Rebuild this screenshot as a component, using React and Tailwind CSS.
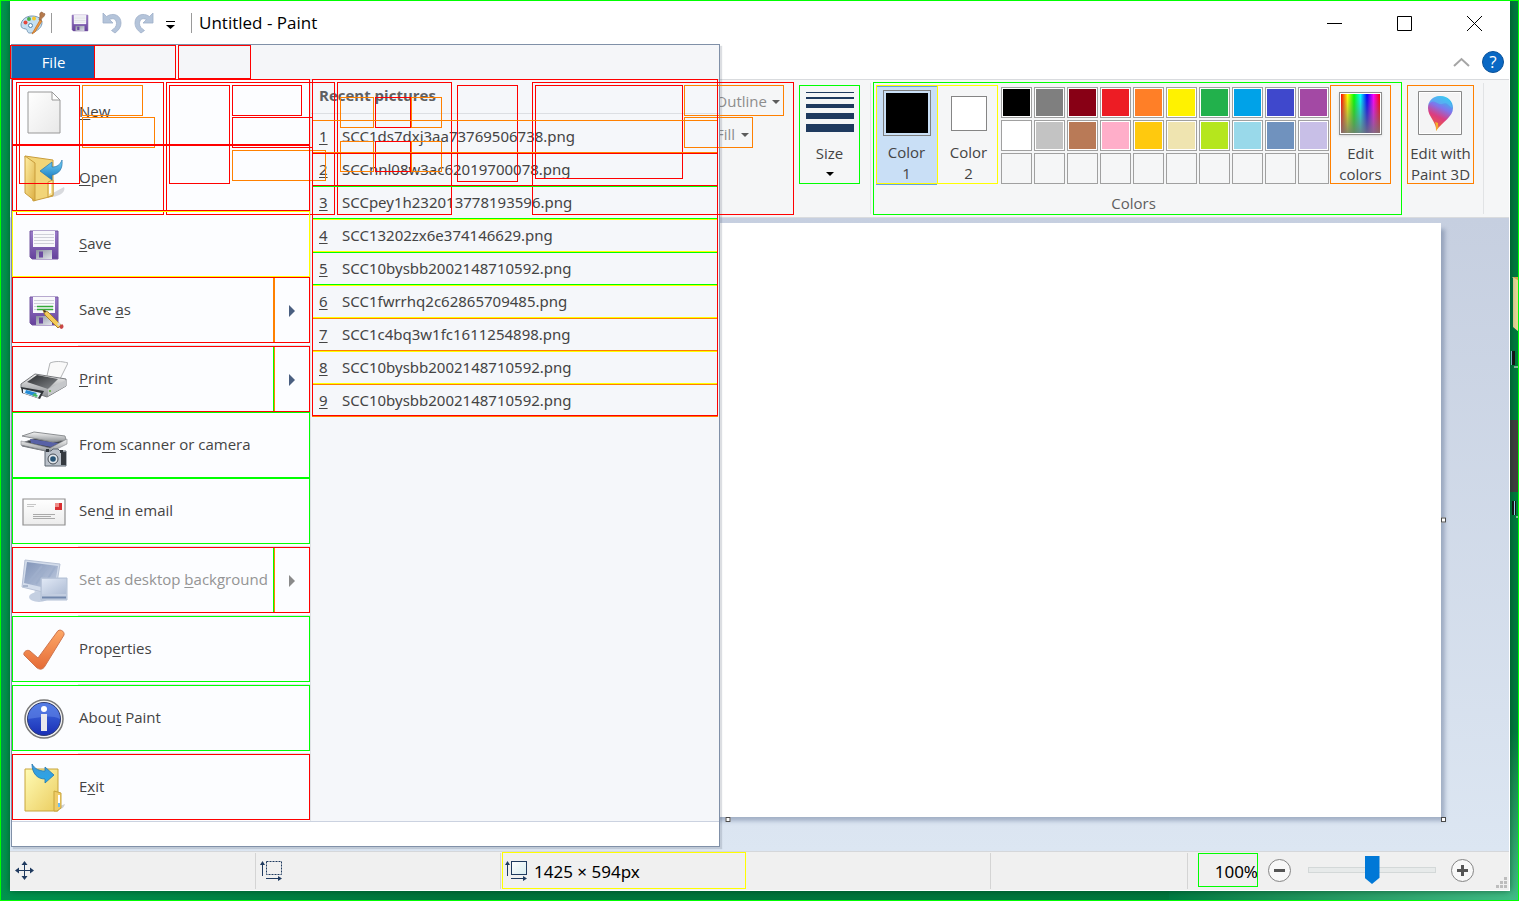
import React from "react";

const swatches = [
  ["Black", "bg-black"], ["Gray", "bg-[#7f7f7f]"], ["Dark red", "bg-[#880015]"], ["Red", "bg-[#ed1c24]"], ["Orange", "bg-[#ff7f27]"],
  ["Yellow", "bg-[#fff200]"], ["Green", "bg-[#22b14c]"], ["Turquoise", "bg-[#00a2e8]"], ["Indigo", "bg-[#3f48cc]"], ["Purple", "bg-[#a349a4]"],
  ["White", "bg-white"], ["Light gray", "bg-[#c3c3c3]"], ["Brown", "bg-[#b97a57]"], ["Rose", "bg-[#ffaec9]"], ["Gold", "bg-[#ffc90e]"],
  ["Light yellow", "bg-[#efe4b0]"], ["Lime", "bg-[#b5e61d]"], ["Light turquoise", "bg-[#99d9ea]"], ["Blue gray", "bg-[#7092be]"], ["Lavender", "bg-[#c8bfe7]"],
];

const recent = [
  "SCC1ds7dxj3aa73769506738.png",
  "SCCnnl08w3ac62019700078.png",
  "SCCpey1h232013778193596.png",
  "SCC13202zx6e374146629.png",
  "SCC10bysbb2002148710592.png",
  "SCC1fwrrhq2c62865709485.png",
  "SCC1c4bq3w1fc1611254898.png",
  "SCC10bysbb2002148710592.png",
  "SCC10bysbb2002148710592.png",
];

const R = "#ff0000";
const O = "#ff8000";
const Y = "#ffff00";
const G = "#00ff00";

// Element bounds: colour, left, top, right, bottom.
const bounds = [
  [G, 0, 0, 1518, 900],
  [R, 10, 45, 94, 78], [R, 94, 45, 175, 78], [R, 178, 45, 250, 78],
  [R, 16, 82, 163, 214], [R, 19, 85, 79, 183], [O, 82, 85, 142, 115], [O, 82, 117, 154, 147],
  [R, 166, 82, 334, 214], [R, 169, 85, 229, 183], [R, 232, 85, 301, 115], [R, 232, 117, 312, 147], [O, 232, 150, 325, 180],
  [R, 337, 82, 451, 214], [O, 340, 97, 373, 127], [O, 411, 97, 441, 127], [R, 375, 97, 410, 127],
  [O, 340, 141, 373, 171], [O, 411, 141, 441, 171], [R, 375, 141, 410, 171],
  [R, 457, 85, 517, 181], [R, 532, 82, 793, 214], [R, 535, 85, 682, 178],
  [O, 684, 85, 783, 115], [O, 684, 117, 752, 147],
  [G, 799, 85, 859, 183], [G, 873, 82, 1401, 214], [Y, 876, 85, 937, 183], [Y, 937, 85, 997, 183],
  [O, 1330, 85, 1390, 183], [O, 1407, 85, 1473, 183],
  [Y, 12, 211, 309, 276], [G, 12, 412, 309, 477], [G, 12, 478, 309, 543],
  [O, 12, 277, 273, 342], [O, 274, 277, 309, 342], [R, 12, 277, 309, 342],
  [G, 12, 346, 273, 411], [O, 274, 346, 309, 411], [R, 12, 346, 309, 411],
  [G, 12, 547, 273, 612], [O, 274, 547, 309, 612], [R, 12, 547, 309, 612],
  [G, 12, 616, 309, 681], [G, 12, 685, 309, 750], [R, 12, 754, 309, 819],
  [R, 12, 79, 309, 144], [R, 12, 145, 309, 210],
  [O, 312, 120, 717, 152], [R, 312, 153, 717, 185], [G, 312, 186, 717, 218], [Y, 312, 219, 717, 251],
  [G, 312, 252, 717, 284], [Y, 312, 285, 717, 317], [O, 312, 318, 717, 350], [Y, 312, 351, 717, 383],
  [O, 312, 384, 717, 416], [R, 312, 79, 717, 415],
  [Y, 502, 852, 745, 888], [G, 1198, 853, 1257, 886],
];

function Bounds() {
  return (
    <svg className="pointer-events-none absolute left-0 top-0 z-20" width="1519" height="901" fill="none" shapeRendering="crispEdges" aria-hidden="true">
      {bounds.map(([c, x0, y0, x1, y1], i) => (
        <rect key={i} x={x0 + 0.5} y={y0 + 0.5} width={x1 - x0} height={y1 - y0} stroke={c} />
      ))}
    </svg>
  );
}

function Gradient({ id, from, to, x2 = 0, y2 = 1 }) {
  return (
    <linearGradient id={id} x1="0" y1="0" x2={x2} y2={y2}>
      <stop offset="0" stopColor={from} />
      <stop offset="1" stopColor={to} />
    </linearGradient>
  );
}

function PaletteIcon() {
  return (
    <svg width="26" height="26" viewBox="0 0 26 26">
      <path d="M12 6C6 6 1 10 1 15c0 3 2 3.600 4 3.800 2 .2 2 1.200 2.500 2.800C8.500 24 12 23 15 21.500c4-2 7-5 7-9C22 9 18 6 12 6Z" fill="#c4dff2" stroke="#7799b5" />
      <circle cx="5.500" cy="12.500" r="2" fill="#e4473c" /><circle cx="9" cy="9" r="2" fill="#4caf50" />
      <circle cx="14" cy="8.500" r="2" fill="#f5c52c" /><circle cx="10.500" cy="15.500" r="2" fill="#fff" stroke="#5785ac" />
      <path d="m13 22 7-12 2 1-7 11-3 2Z" fill="#f29a3b" stroke="#ba6a24" strokeWidth=".7" />
      <path d="m19 10 1-4c-1-3 1-4 2-4 1 2 3 1 3 2-1 4-3 3-4 6Z" fill="#b67a4c" stroke="#8c5b38" strokeWidth=".6" />
    </svg>
  );
}

function Floppy({ size = 32, pencil = false }) {
  return (
    <svg width={size} height={size} viewBox="0 0 32 32" overflow="visible">
      <defs><Gradient id="flop" from="#9b7cc9" to="#65419b" /><Gradient id="shut" from="#8b919e" to="#e3e6ec" x2={1} /></defs>
      <path d="M2 2h28v28H4l-2-2Z" fill="url(#flop)" stroke="#72549f" />
      <path d="M5 2h22v16H5Z" fill="#f8f8fb" />
      <path d="M6 5.500h20M6 8.500h20M6 11.500h20M6 14.500h20" stroke="#cfd0d8" />
      <path d="M8 21h16v9H8Z" fill="url(#shut)" /><path d="M11 22.500h4v6h-4Z" fill="#6b4aa1" />
      {pencil && (
        <g>
          <path d="M9 11.500h16M9 14.500h16" stroke="#35aa38" strokeWidth="1.500" />
          <path d="m15 15 5 2 13 13-3 3-13-13Z" fill="#f5cb59" stroke="#a9822f" />
          <path d="m15 15 3 1-1 2Z" fill="#2b2b2b" />
          <path d="m29 29 2-2 2 2-2 2Z" fill="#d5d5d5" /><path d="m31 32 3-3c3 2 1 5-1 5Z" fill="#c94646" />
        </g>
      )}
    </svg>
  );
}

function UndoIcon({ flip = false }) {
  return (
    <svg width="20" height="22" viewBox="0 0 20 22" className={flip ? "-scale-x-100" : ""}>
      <path d="M1 1v10h10L7.500 7.500c4-2 7 0 7 4 0 3-2 5-5 7L13 21c4-3 6-6 6-10C19 3 11 0 4.500 4.500Z" fill="#b4c4da" stroke="#9fb0c9" strokeWidth=".8" />
    </svg>
  );
}

function NewIcon() {
  return (
    <svg width="36" height="44" viewBox="0 0 36 44">
      <defs><Gradient id="paper" from="#ffffff" to="#e8e8e8" x2={1} /></defs>
      <path d="M2 1h24l8 8v33H2Z" fill="url(#paper)" stroke="#989898" /><path d="M26 1v8h8Z" fill="#fff" stroke="#989898" />
    </svg>
  );
}

function OpenIcon() {
  return (
    <svg width="44" height="48" viewBox="0 0 44 48">
      <defs><Gradient id="fold" from="#fff0a6" to="#dcae42" x2={1} /><Gradient id="arr" from="#74d3f8" to="#1677be" /></defs>
      <path d="m31 38 11-6c2 4-3 9-12 10Z" fill="#d8dade" />
      <path d="m3 1 28 4v36l-20 5Z" fill="#f2d578" stroke="#c99d3c" /><path d="m26 27 5-2v15l-5 2Z" fill="#fce79b" stroke="#c99d3c" />
      <path d="M3 1 13 8v38L3 38Z" fill="url(#fold)" stroke="#c99d3c" /><path d="m27 29 2-1v10l-2 1Z" fill="#fff" />
      <path d="m18 16 12-9v5c5 0 8-2 10-7 1 9-3 14-10 15v5Z" fill="url(#arr)" stroke="#2876ad" strokeWidth=".7" />
    </svg>
  );
}

function ExitIcon() {
  return (
    <svg width="44" height="50" viewBox="0 0 44 50">
      <defs><Gradient id="ef" from="#fffbb5" to="#ebcd60" x2={1} /><Gradient id="ea" from="#3d98d8" to="#28a8ea" /></defs>
      <path d="m38 43 5-2c-1 4-4 5-7 6Z" fill="#cfd1d4" />
      <path d="M3 6h33v42H3Z" fill="url(#ef)" stroke="#c8a53c" /><path d="m32 28 7 2v15l-4 3h-3Z" fill="#f0cc69" stroke="#c8a53c" />
      <path d="M37 32v12" stroke="#fff" strokeWidth="2" /><path d="M37 40v4" stroke="#6dbdf0" strokeWidth="2" />
      <path d="M10 1c3 5 7 7 13 7V4l9 8-9 8v-4C15 16 10 10 10 1Z" fill="url(#ea)" stroke="#2377ad" strokeWidth=".8" />
    </svg>
  );
}

function PrintIcon() {
  return (
    <svg width="48" height="40" viewBox="0 0 48 40">
      <defs><Gradient id="pb" from="#f2f2f2" to="#8c8f93" /><Gradient id="pk" from="#2c2e31" to="#85888c" x2={1} /></defs>
      <path d="m26 20 4-17c5-2 11-2 18 0L39 21Z" fill="#f9f9f9" stroke="#b2b4b6" />
      <path d="m1 24 14-10 31 5v7L27 37 1 28Z" fill="url(#pb)" stroke="#77797c" />
      <path d="m7 22 10-7 21 4-10 10Z" fill="url(#pk)" /><path d="m28 29 18-9v6L28 36Z" fill="#c5c7ca" />
      <path d="m1 27 23 4-4 8L2 33Z" fill="#303438" /><path d="m3 29 18 4-3 5-15-5Z" fill="#eaf5fd" /><path d="m6 30 11 3-3 3-9-3Z" fill="#248bd5" /><path d="m12 35 3-2 3 3-2 1Z" fill="#46b865" />
      <circle cx="30" cy="31" r="1" fill="#58ad35" />
    </svg>
  );
}

function ScannerIcon() {
  return (
    <svg width="48" height="38" viewBox="0 0 48 38" className="mt-[5px]">
      <defs><Gradient id="sc" from="#f5f5f5" to="#8e9296" /></defs>
      <path d="m2 13 20-7 24 4-15 12-15-3-14-3Z" fill="#3a3e44" stroke="#777b80" /><path d="m10 9 29 4-8 4-20-4Z" fill="#5861a6" />
      <path d="m2 6 12-4 31 4 1 4-13 2Z" fill="url(#sc)" stroke="#8c8f92" /><path d="m1 11 29 7 17-9v5L31 22 1 15Z" fill="url(#sc)" stroke="#83878b" strokeWidth=".6" />
      <path d="M25 21h6l2-2h5l2 2h6v15H25Z" fill="#bac1ca" stroke="#5d6670" /><path d="M41 22h5v13h-5Z" fill="#353a40" />
      <circle cx="33" cy="29" r="5" fill="#e2e7ec" stroke="#454c54" /><circle cx="33" cy="29" r="2.800" fill="#275475" /><path d="M26 19h3v3h-3ZM40 20h3v3h-3Z" fill="#30363d" />
    </svg>
  );
}

function MailIcon() {
  return (
    <svg width="46" height="30" viewBox="0 0 46 30">
      <defs><Gradient id="mail" from="#ffffff" to="#ececec" /></defs>
      <path d="M2 2h42v26H2Z" fill="url(#mail)" stroke="#909090" strokeWidth="1.200" />
      <path d="M34 6h7v7h-7Z" fill="#d92e31" /><path d="M34 6h4v4h-4Z" fill="#ee8d88" />
      <path d="M6 7.500h9M6 9.500h7" stroke="#c7c7c7" /><path d="M12 17.500h22M12 19.500h18M12 21.500h22" stroke="#a9a9a9" />
    </svg>
  );
}

function DesktopIcon() {
  return (
    <svg width="48" height="46" viewBox="0 0 48 46">
      <defs><Gradient id="d1" from="#8194b8" to="#c2cde1" x2={1} /><Gradient id="d2" from="#e0e8f5" to="#afbdd5" x2={1} /></defs>
      <path d="M15 31h8v7H14Z" fill="#ccd6e6" /><ellipse cx="19" cy="39" rx="10" ry="5" fill="#c4cfe1" />
      <path d="m5 2 35 4-5 31L2 29Z" fill="#d3dceb" stroke="#b6c1d5" /><path d="m7 4 31 4-4 24L4 25Z" fill="url(#d1)" />
      <path d="m9 24 13-16M16 26 28 8M24 27 35 9" stroke="#9eaecb" strokeWidth="2" /><path d="M3 28h5" stroke="#7c8fae" />
      <path d="M21 20h26v22H21Z" fill="#c2cde0" stroke="#b2c0d5" /><path d="M22 21h24v15H22Z" fill="url(#d2)" /><path d="M22 39.500h24" stroke="#7187ac" strokeWidth="2" />
    </svg>
  );
}

function CheckIcon() {
  return (
    <svg width="44" height="44" viewBox="0 0 44 44">
      <defs><Gradient id="chk" from="#fda868" to="#e56b36" /></defs>
      <path d="M2 27c-1-3 3-6 6-4l8 7L35 4c2-4 8-1 7 3L23 38c-2 4-6 4-9 1Z" fill="url(#chk)" stroke="#ce7650" />
    </svg>
  );
}

function InfoIcon() {
  return (
    <svg width="42" height="42" viewBox="0 0 42 42">
      <defs><Gradient id="info" from="#4270e3" to="#1a2fb5" /></defs>
      <circle cx="21" cy="21" r="19" fill="#f2f2f2" stroke="#777" strokeWidth="1.500" /><circle cx="21" cy="21" r="16.500" fill="url(#info)" stroke="#303d73" />
      <path d="M5 21a16 16 0 0 1 32 0c-10-5-21-1-32 0Z" fill="#6689e8" opacity=".55" />
      <circle cx="21" cy="11" r="3" fill="#fff" /><path d="M18 16h6v17h-6Z" fill="#e9e9ec" />
    </svg>
  );
}

function Paint3DIcon() {
  return (
    <svg width="44" height="44" viewBox="0 0 44 44">
      <defs>
        <linearGradient id="p3" x1=".7" y1="0" x2=".35" y2="1">
          <stop offset="0" stopColor="#20cdf0" /><stop offset=".35" stopColor="#8075ec" /><stop offset=".62" stopColor="#dc3c80" /><stop offset=".82" stopColor="#e75252" /><stop offset="1" stopColor="#f3b728" />
        </linearGradient>
      </defs>
      <path d="M.5.500h43v43H.5Z" fill="#f4f4f5" stroke="#898989" /><path d="M1.500 1.500h41v41h-41Z" fill="none" stroke="#fff" />
      <path d="M22 5c8 0 13 5 13 12 0 9-10 13-17 23 1-9-8-14-8-23C10 10 15 5 22 5Z" fill="url(#p3)" />
      <path d="M10 15c5-10 10 0 14-2 5-2 5 0 10 4-1-8-5-12-12-12-6 0-11 4-12 10Z" fill="#54c5f5" opacity=".5" />
      <path d="m17 31 3 1c0 3 0 5-2 8 1-4 0-6-1-9Z" fill="#f5b12d" />
    </svg>
  );
}

function EditColorsIcon() {
  return (
    <span className="block size-[43px] border border-[#8d8d8d] bg-white p-px shadow-sm">
      <span className="block size-full bg-[linear-gradient(to_top,#777777dd,transparent),linear-gradient(to_right,#f00,#ff0,#0f0,#0ff,#00f,#f0f,#f00)]" />
    </span>
  );
}

function SizeIcon() {
  return (
    <svg width="48" height="40" fill="#1f3a5f" shapeRendering="crispEdges">
      <path d="M0 0h48v1H0ZM0 5h48v2H0ZM0 12h48v4H0ZM0 21h48v6H0ZM0 32h48v8H0Z" />
    </svg>
  );
}

function Caret({ className = "text-[#5c5c5c]" }) {
  return <svg width="8" height="4" className={className}><path d="M0 0h8L4 4Z" fill="currentColor" /></svg>;
}

function MoveIcon() {
  return (
    <svg width="20" height="20" viewBox="0 0 20 20" fill="#1f3a5f">
      <path d="M9 2h1v16H9ZM2 9h16v1H2ZM9.500 0l3 4h-6ZM9.500 19l-3-4h6ZM0 9.500l4-3v6ZM19 9.500l-4 3v-6Z" />
    </svg>
  );
}

function MeasureIcon({ dashed = false }) {
  return (
    <svg width="23" height="21" viewBox="0 0 23 21" fill="#1f3a5f">
      <defs><Gradient id="ms" from="#ffffff" to="#d8ecef" x2={1} /></defs>
      <path d="M2 3h1v12H2ZM2.500 0l2.500 4H0ZM6 17h13v1H6ZM22 17.500 18 20v-5Z" />
      <rect x="6.500" y=".5" width="15" height="13" fill={dashed ? "none" : "url(#ms)"} stroke="#1f3a5f" strokeDasharray={dashed ? "2 1" : undefined} />
    </svg>
  );
}

// The letter after "&" is the access key.
function Label({ text }) {
  const at = text.indexOf("&");
  return (
    <span className="whitespace-pre pb-1">
      {text.slice(0, at)}
      <span className="underline underline-offset-2">{text[at + 1]}</span>
      {text.slice(at + 2)}
    </span>
  );
}

function MenuItem({ icon, text, more = false, disabled = false }) {
  return (
    <div className={`flex h-[66px] ${disabled ? "text-[#949494]" : "text-[#444]"}`}>
      <button disabled={disabled} className="flex flex-1 items-center text-left">
        <span className="mr-[3px] flex w-16 justify-center">{icon}</span>
        <Label text={text} />
      </button>
      {more && (
        <button disabled={disabled} aria-label="More" className="flex w-9 items-center justify-center">
          <svg width="6" height="12"><path d="M0 0l6 6-6 6Z" fill={disabled ? "#8a8a8a" : "#4a5f80"} /></svg>
        </button>
      )}
    </div>
  );
}

function Rule() {
  return <div className="flex h-[3px] items-center pl-[66px]"><div className="h-px flex-1 bg-[#e1e3e6]" /></div>;
}

function FileMenu() {
  return (
    <div className="absolute left-px top-[43px] z-10 w-[709px] border border-[#8090a8] bg-white shadow-[2px_2px_1px_rgba(80,90,110,0.2)]">
      <div className="flex h-[34px] bg-[#f5f6f9]">
        <button className="w-[83px] bg-[#1368b3] text-white">File</button>
      </div>
      <div className="flex border-y border-[#cbd2e0]">
        <nav className="w-[299px] shrink-0 border-r border-[#dfe2e6] bg-[#fcfdff]">
          <MenuItem icon={<NewIcon />} text="&New" />
          <MenuItem icon={<OpenIcon />} text="&Open" />
          <MenuItem icon={<Floppy />} text="&Save" />
          <MenuItem icon={<Floppy pencil />} text="Save &as" more />
          <Rule />
          <MenuItem icon={<PrintIcon />} text="&Print" more />
          <MenuItem icon={<ScannerIcon />} text="Fro&m scanner or camera" />
          <MenuItem icon={<MailIcon />} text="Sen&d in email" />
          <Rule />
          <MenuItem icon={<DesktopIcon />} text="Set as desktop &background" more disabled />
          <Rule />
          <MenuItem icon={<CheckIcon />} text="Prop&erties" />
          <Rule />
          <MenuItem icon={<InfoIcon />} text="Abou&t Paint" />
          <Rule />
          <MenuItem icon={<ExitIcon />} text="E&xit" />
        </nav>
        <section className="flex-1 bg-[#f5f7fa] text-[#444]">
          <h2 className="mb-[6px] h-[34px] border-b border-[#dcdfe3] pl-2 font-bold leading-[30px] text-[#5f6062]">Recent pictures</h2>
          <ol className="font-['Noto_Sans','Open_Sans',sans-serif]">
            {recent.map((name, i) => (
              <li key={i}>
                <button className="flex h-[33px] w-full items-center pl-2 text-left">
                  <span className="w-[23px] underline underline-offset-2">{i + 1}</span>
                  {name}
                </button>
              </li>
            ))}
          </ol>
        </section>
      </div>
      <div className="h-6" />
    </div>
  );
}

function TitleBar() {
  return (
    <header className="flex h-11 items-center pl-[10px]">
      <PaletteIcon />
      <div className="ml-[5px] h-5 w-px bg-[#9a9a9a]" />
      <button aria-label="Save" className="ml-[19px]"><Floppy size={18} /></button>
      <button aria-label="Undo" className="ml-[13px]"><UndoIcon /></button>
      <button aria-label="Redo" className="ml-3"><UndoIcon flip /></button>
      <button aria-label="Customize toolbar" className="ml-3 mt-1">
        <svg width="9" height="8"><path d="M0 0h9v1H0ZM0 4h9L4.500 8Z" /></svg>
      </button>
      <div className="ml-4 h-5 w-px bg-[#9a9a9a]" />
      <h1 className="ml-[7px] flex-1 text-[17px] text-black">Untitled - Paint</h1>
      <button aria-label="Minimize" className="flex w-[70px] justify-center"><svg width="15" height="15"><path d="M0 7h15v1H0Z" /></svg></button>
      <button aria-label="Maximize" className="flex w-[70px] justify-center"><svg width="15" height="15"><path d="M.5.500h14v14H.5Z" fill="none" stroke="#000" /></svg></button>
      <button aria-label="Close" className="flex w-[70px] justify-center"><svg width="15" height="15"><path d="m0 0 15 15M15 0 0 15" stroke="#000" /></svg></button>
    </header>
  );
}

function Ribbon() {
  return (
    <div className="flex h-[139px] border-b border-t border-[#d9dbde] bg-[#f5f6f7] pt-[5px] text-[#444]">
      <div className="ml-[674px] flex w-[115px] flex-col items-start gap-[2px] pt-px text-[#8d8d8d]">
        <button className="flex h-[31px] w-[100px] items-center justify-end gap-[5px] pr-1">Outline <Caret /></button>
        <button className="flex h-[31px] w-[69px] items-center justify-end gap-[6px] pr-1">Fill <Caret /></button>
      </div>
      <button className="flex h-[99px] w-[61px] flex-col items-center pt-[7px]">
        <SizeIcon />
        <span className="mt-[11px] leading-[21px]">Size</span>
        <Caret className="mt-2 text-black" />
      </button>
      <div className="-mt-[2px] ml-[10px] mr-[5px] h-[131px] w-px bg-[#e1e3e5]" />
      <div className="w-[515px]">
        <div className="flex h-[99px]">
          <button className="mt-px flex h-[99px] w-[61px] flex-col items-center border-y border-[#64a2dc] bg-[#c9dff6] pt-[3px] leading-[21px]">
            <span className="mb-[6px] size-12 border border-[#7e7e7e] bg-[#c9dff6] p-[2px]"><span className="block size-full bg-black" /></span>
            Color<br />1
          </button>
          <button className="flex w-[62px] flex-col items-center pl-px pt-[11px] leading-[21px]">
            <span className="mb-[11px] size-9 border border-[#858585] bg-white" />
            Color<br />2
          </button>
          <div className="ml-[2px] mt-[2px] grid w-[328px] grid-cols-10 gap-[2px] self-start">
            {swatches.map(([name, fill]) => (
              <button key={name} aria-label={name} className="size-[31px] border border-[#a0a0a0] bg-white p-px"><span className={`block size-full ${fill}`} /></button>
            ))}
            {Array.from({ length: 10 }, (_, i) => (
              <button key={i} aria-label={`Custom color ${i + 1}`} className="size-[31px] border border-[#a0a0a0]" />
            ))}
          </div>
          <button className="ml-px flex w-[61px] flex-col items-center pt-[7px] leading-[21px]">
            <span className="mb-[8px]"><EditColorsIcon /></span>
            Edit<br />colors
          </button>
        </div>
        <div className="mt-[9px] text-center leading-[21px] text-[#5e5e5e]">Colors</div>
      </div>
      <button className="ml-4 flex h-[99px] w-[67px] flex-col items-center whitespace-nowrap pt-[6px] leading-[21px]">
        <span className="mb-[8px] pr-[2px]"><Paint3DIcon /></span>
        Edit with<br />Paint 3D
      </button>
      <div className="-mt-[2px] ml-[9px] h-[131px] w-px bg-[#e1e3e5]" />
    </div>
  );
}

function Workspace() {
  const handle = "absolute size-[5px] border border-[#4a4a4a] bg-white";
  return (
    <main className="flex flex-1 bg-linear-to-b from-[#c6cfe0] to-[#dce6f2] pb-[34px] pl-[5px] pr-[68px] pt-[5px]">
      <div className="relative flex-1 bg-white shadow-[5px_5px_4px_-1px_rgba(80,100,135,0.4)]">
        <span className={`${handle} -right-[5px] top-1/2 -translate-y-1/2`} />
        <span className={`${handle} -bottom-[5px] left-1/2 -translate-x-1/2`} />
        <span className={`${handle} -bottom-[5px] -right-[5px]`} />
      </div>
    </main>
  );
}

function StatusBar() {
  const cell = "flex h-9 items-center border-r border-[#d4d4d4]";
  return (
    <footer className="relative flex h-[39px] items-center border-t border-[#d5d7da] bg-[#f0f0f0] text-[17px] text-black">
      <div className={`${cell} w-[246px] pl-[5px]`}><MoveIcon /></div>
      <div className={`${cell} w-[245px] pl-1`}><MeasureIcon dashed /></div>
      <div className={`${cell} w-[245px] gap-[6px] pl-1 font-['Noto_Sans','Open_Sans',sans-serif]`}><MeasureIcon /><span className="pt-[2px]">1425 × 594px</span></div>
      <div className={`${cell} w-[245px]`} />
      <div className={`${cell} flex-1`} />
      <div className="flex w-[321px] items-center pb-[2px]">
        <output className="w-[70px] pt-1 text-right font-['Noto_Sans','Open_Sans',sans-serif]">100%</output>
        <button aria-label="Zoom out" className="ml-[10px]">
          <svg width="23" height="23"><circle cx="11.500" cy="11.500" r="11" fill="#f8f8f8" stroke="#858585" /><path d="M6 10h11v3H6Z" fill="#555" /></svg>
        </button>
        <input
          aria-label="Zoom"
          type="range"
          defaultValue="50"
          className="ml-[17px] mr-[15px] h-7 w-32 appearance-none bg-transparent [&::-webkit-slider-runnable-track]:h-[6px] [&::-webkit-slider-runnable-track]:border [&::-webkit-slider-runnable-track]:border-[#d3d8d8] [&::-webkit-slider-runnable-track]:bg-[#e7eaea] [&::-webkit-slider-thumb]:-mt-3 [&::-webkit-slider-thumb]:h-7 [&::-webkit-slider-thumb]:w-[15px] [&::-webkit-slider-thumb]:appearance-none [&::-webkit-slider-thumb]:bg-[#0078d7] [&::-webkit-slider-thumb]:[clip-path:polygon(0_0,100%_0,100%_78%,50%_100%,0_78%)]"
        />
        <button aria-label="Zoom in">
          <svg width="23" height="23"><circle cx="11.500" cy="11.500" r="11" fill="#f8f8f8" stroke="#858585" /><path d="M6 10h4V6h3v4h4v3h-4v4h-3v-4H6Z" fill="#555" /></svg>
        </button>
      </div>
      <svg width="11" height="11" className="absolute bottom-[2px] right-[2px]" fill="#bdbdbd" aria-hidden="true">
        <path d="M8 0h3v3H8ZM8 4h3v3H8ZM8 8h3v3H8ZM4 4h3v3H4ZM4 8h3v3H4ZM0 8h3v3H0Z" />
      </svg>
    </footer>
  );
}

function DesktopEdge() {
  return (
    <svg width="9" height="250" className="absolute right-0 top-[275px]" aria-hidden="true">
      <path d="M2 2h7v55l-6-5V3Z" fill="#ead99a" /><path d="M3 2h6v4Z" fill="#d5a94c" />
      <path d="M0 145h9v72H0Z" fill="#404040" />
      <path d="M2 76h3v14H2ZM2 226h4v14H2Z" fill="#151515" /><path d="M1 76h1v14H1ZM4 226h1v14H4Z" fill="#9bd5f5" /><path d="M4 92h5M6 242h3" stroke="#fff" />
    </svg>
  );
}

export default function App() {
  return (
    <div className="relative flex min-h-screen bg-[linear-gradient(to_right,#00944e,#00743b_30%,#00783e_80%,#007b3e)] pb-[10px] pl-[10px] pr-[9px] pt-px font-['Open_Sans','Noto_Sans',sans-serif] text-[15px]">
      <div className="absolute bottom-0 right-0 h-[10px] w-[350px] bg-linear-to-r from-[#007c43] to-[#41bd87]" />
      <div className="absolute bottom-0 right-0 h-[170px] w-[9px] bg-linear-to-b from-[#007b3e] to-[#41bd87]" />
      <DesktopEdge />
      <div className="relative flex flex-1 flex-col border-b border-r border-white bg-white shadow-[0_0_7px_rgba(0,50,25,0.6)]">
        <TitleBar />
        <div className="flex h-[34px] items-center justify-end gap-3 pr-[5px]">
          <button aria-label="Collapse ribbon"><svg width="17" height="10" fill="none"><path d="m1 9 7.500-7L16 9" stroke="#a5a5a5" strokeWidth="2" /></svg></button>
          <button aria-label="Help" className="flex size-[22px] items-center justify-center rounded-full border border-[#0b5299] bg-[#0a68c4] text-[17px] font-medium text-white">?</button>
        </div>
        <Ribbon />
        <Workspace />
        <StatusBar />
        <FileMenu />
      </div>
      <Bounds />
    </div>
  );
}
